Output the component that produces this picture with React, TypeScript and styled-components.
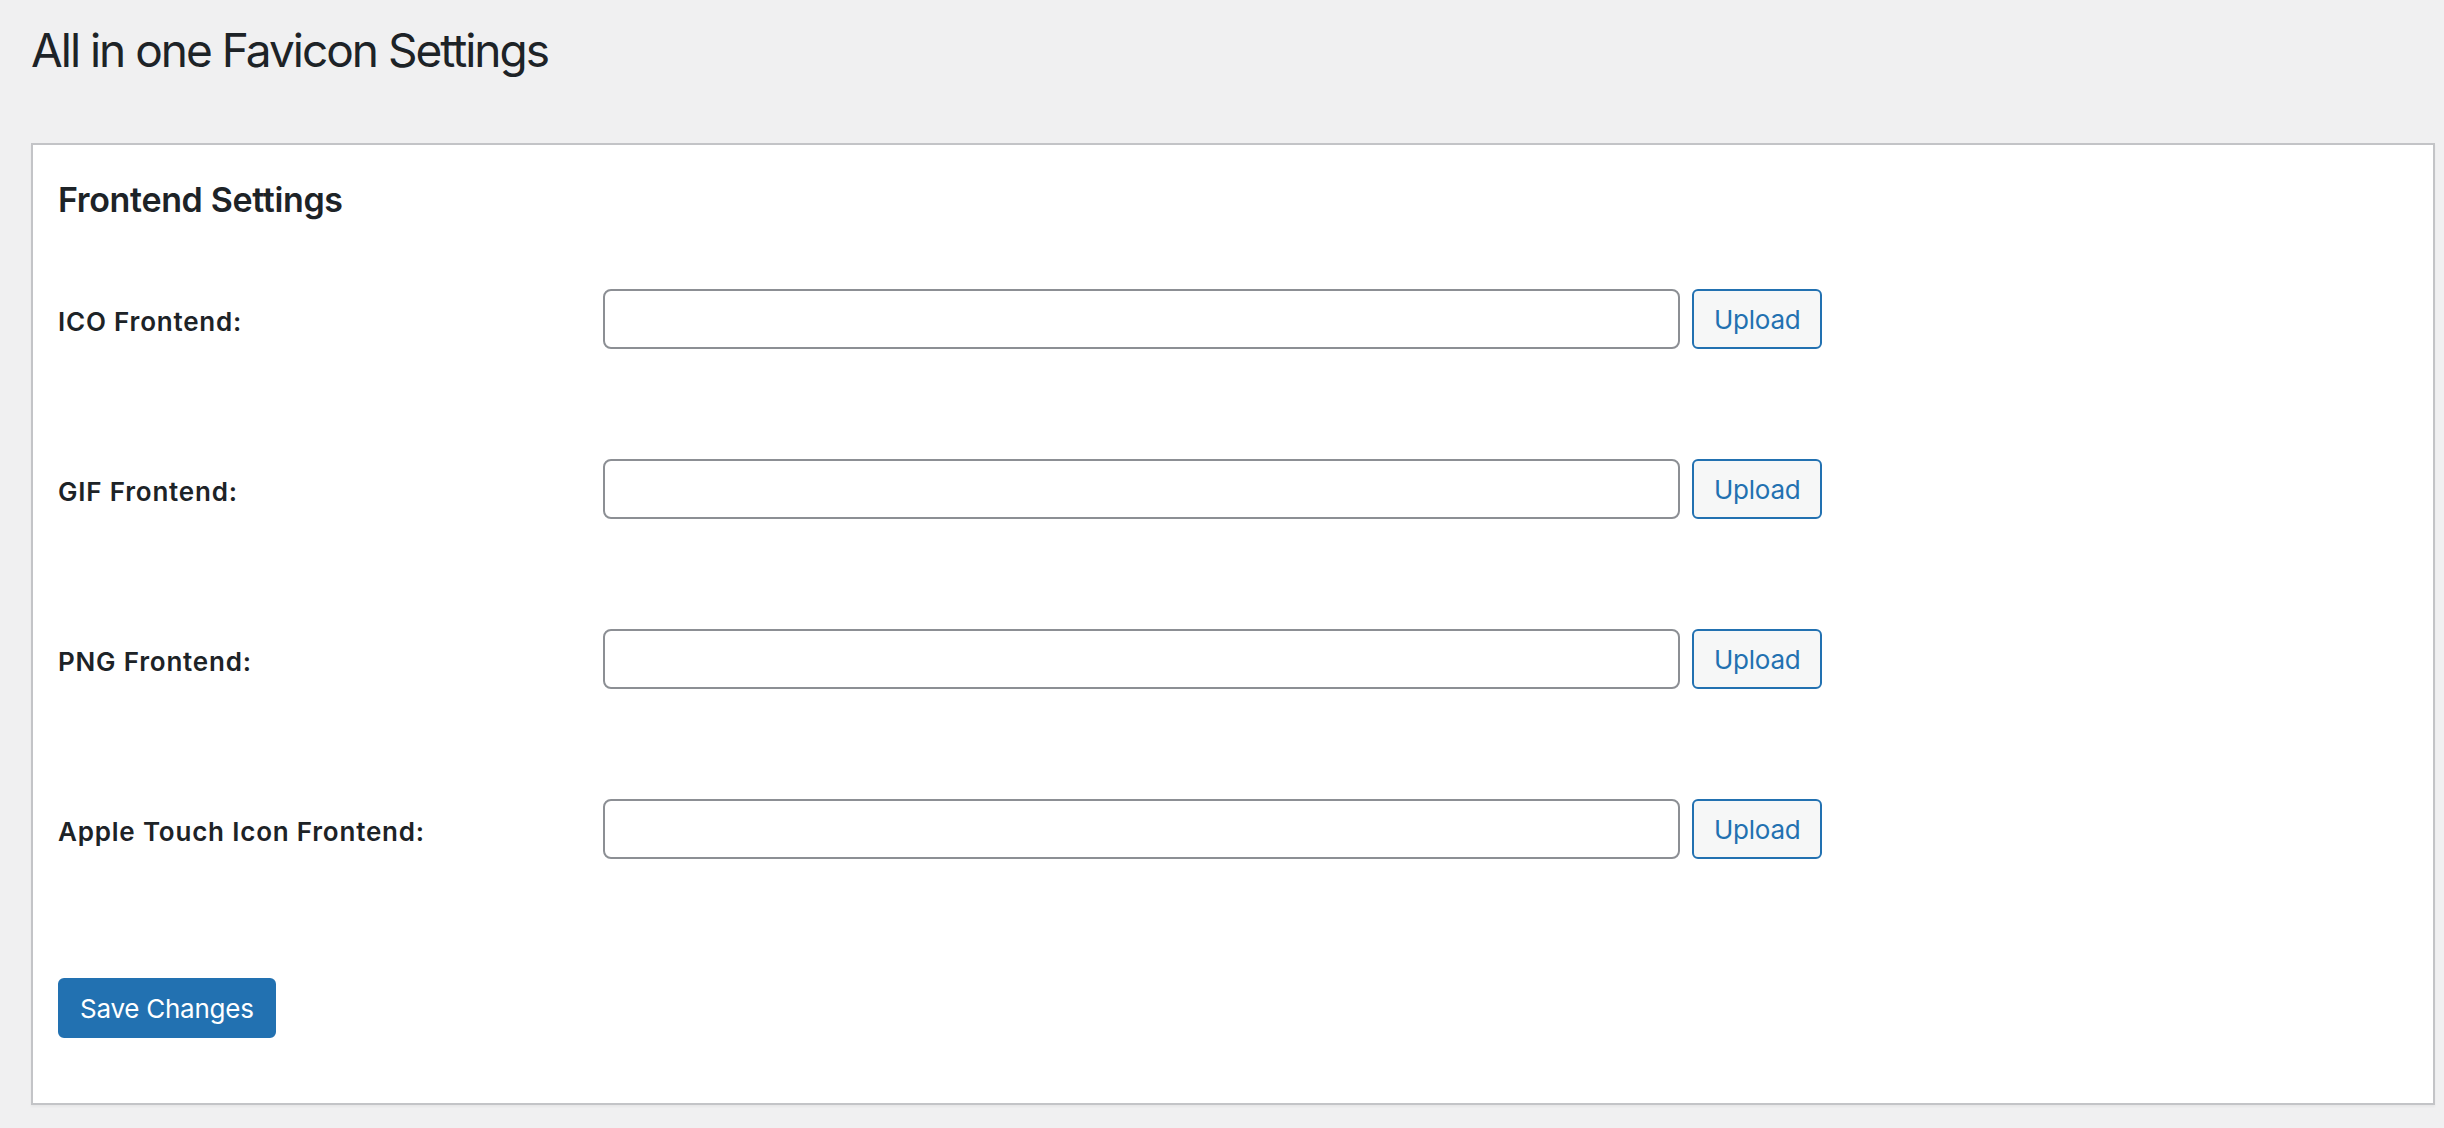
import React from 'react';
import styled, { createGlobalStyle } from 'styled-components';

const GlobalStyle = createGlobalStyle`
  html, body {
    margin: 0;
    background: #f0f0f1;
  }
  body {
    font-family: Inter, "Noto Sans", "Liberation Sans", sans-serif;
    color: #1d2327;
  }
`;

const Wrap = styled.div`
  padding: 20px 9px 22px 31px;
`;

const Title = styled.h1`
  margin: 0 0 63px;
  font-size: 46px;
  line-height: 60px;
  font-weight: 400;
  letter-spacing: -2px;
  color: #1d2327;
`;

const Card = styled.form`
  display: flex;
  flex-direction: column;
  background: #fff;
  border: 2px solid #c3c4c7;
  box-shadow: 0 2px 2px rgba(0, 0, 0, 0.04);
  padding: 33px 25px 65px;
`;

const SectionTitle = styled.h2`
  margin: 0 0 67px;
  font-size: 34px;
  line-height: 44px;
  font-weight: 600;
  letter-spacing: -0.35px;
`;

const Fields = styled.div`
  display: flex;
  flex-direction: column;
  gap: 110px;
`;

const Row = styled.div`
  display: flex;
  align-items: center;
  height: 60px;
`;

const Label = styled.label`
  width: 545px;
  flex-shrink: 0;
  padding-top: 4px;
  font-size: 26px;
  font-weight: 600;
  letter-spacing: 0.8px;
`;

const TextInput = styled.input`
  box-sizing: border-box;
  width: 1077px;
  height: 60px;
  margin: 0 12px 0 0;
  padding: 0 16px;
  border: 2px solid #8c8f94;
  border-radius: 8px;
  background: #fff;
  font: inherit;
  font-size: 26px;
`;

const Button = styled.button<{ $primary?: boolean }>`
  box-sizing: border-box;
  height: 60px;
  padding: 0 20px;
  border: 2px solid #2271b1;
  border-radius: 6px;
  background: ${(p) => (p.$primary ? '#2271b1' : '#f6f7f7')};
  color: ${(p) => (p.$primary ? '#fff' : '#2271b1')};
  font-family: inherit;
  font-size: 26px;
  font-weight: 400;
  letter-spacing: -0.25px;
  cursor: pointer;
`;

const Submit = styled.div`
  margin-top: 119px;
`;

const fields = [
  'ICO Frontend:',
  'GIF Frontend:',
  'PNG Frontend:',
  'Apple Touch Icon Frontend:',
];

const App: React.FC = () => {
  return (
    <Wrap>
      <GlobalStyle />
      <Title>All in one Favicon Settings</Title>
      <Card onSubmit={(e) => e.preventDefault()}>
        <SectionTitle>Frontend Settings</SectionTitle>
        <Fields>
          {fields.map((label) => (
            <Row key={label}>
              <Label>{label}</Label>
              <TextInput type="text" />
              <Button type="button">Upload</Button>
            </Row>
          ))}
        </Fields>
        <Submit>
          <Button $primary type="submit">
            Save Changes
          </Button>
        </Submit>
      </Card>
    </Wrap>
  );
};

export default App;
